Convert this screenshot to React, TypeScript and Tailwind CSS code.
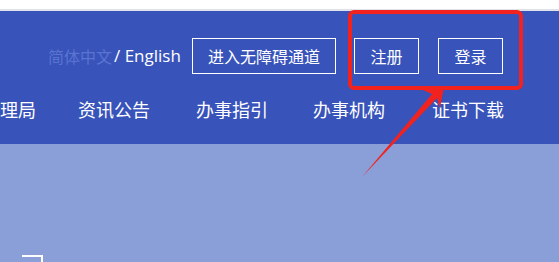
import React from 'react';

const navItems = ['理局', '资讯公告', '办事指引', '办事机构', '证书下载'];

const cjk = { fontFamily: '"Microsoft YaHei", "Noto Sans CJK SC", "Noto Sans", sans-serif' };

export default function App() {
  return (
    <div className="relative w-[559px] h-[262px] overflow-hidden bg-[#8a9ed7]" style={cjk}>
      {/* top white strip */}
      <div className="h-[9px] bg-white" />
      <div className="h-[2px] bg-[#dfe2ea]" />

      {/* blue header */}
      <div className="h-[133px] bg-[#3853b9] text-white pt-[27px]">
        <div className="flex items-center h-[36px] pl-[48px] whitespace-nowrap">
          <span className="text-[16px] text-[#5a74d2]">简体中文</span>
          <span className="text-[17px] ml-[2px]" style={{ fontFamily: '"Open Sans", "Noto Sans", sans-serif' }}>
            / English
          </span>
          <button className="ml-[11px] h-[36px] w-[144px] shrink-0 border border-white text-[16px]">进入无障碍通道</button>
          <button className="ml-[18px] h-[36px] w-[65px] shrink-0 border border-white text-[16px]">注册</button>
          <button className="ml-[19px] h-[36px] w-[65px] shrink-0 border border-white text-[16px]">登录</button>
        </div>
        <div className="flex items-center mt-[22px] h-[26px] text-[18px] whitespace-nowrap">
          <span className="w-[33px] shrink-0">{navItems[0]}</span>
          <span className="ml-[45px] w-[72px] shrink-0">{navItems[1]}</span>
          <span className="ml-[46px] w-[72px] shrink-0">{navItems[2]}</span>
          <span className="ml-[45px] w-[72px] shrink-0">{navItems[3]}</span>
          <span className="ml-[47px] w-[72px] shrink-0">{navItems[4]}</span>
        </div>
      </div>

      {/* hero area */}
      <div className="pl-[22px] pt-[111px]">
        <div className="w-[21px] h-[10px] border-t-2 border-r-2 border-white" />
      </div>

      {/* red annotation */}
      <svg className="absolute inset-0 pointer-events-none" width="559" height="262" viewBox="0 0 559 262">
        <rect x="350" y="12" width="171" height="76" rx="4" fill="none" stroke="#f2231f" strokeWidth="4" />
        <polygon points="444,87 423,90 432,94 362,177 437,98 440,108" fill="#f2231f" />
      </svg>
    </div>
  );
}
